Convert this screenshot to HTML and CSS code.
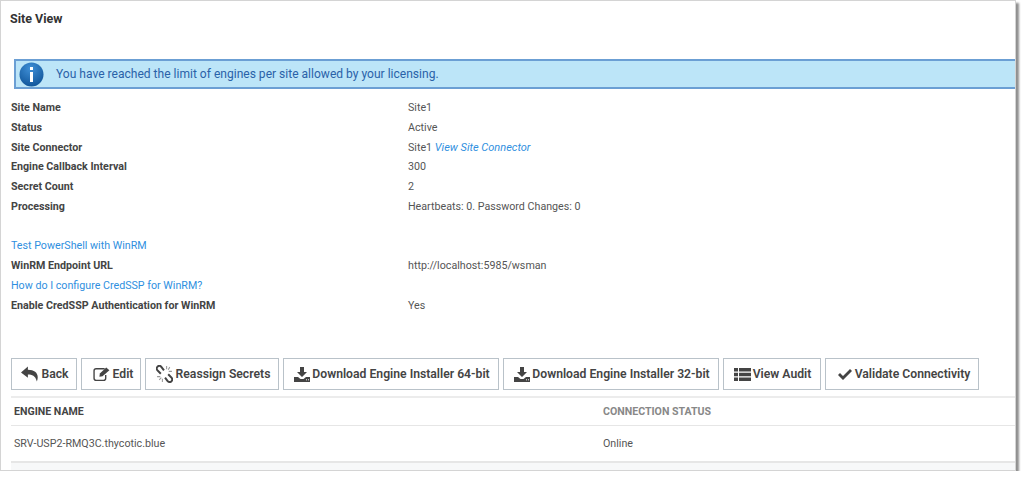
FILE: index.html
```html
<!DOCTYPE html>
<html lang="en">

<head>
    <meta charset="UTF-8">
    <title>Site View</title>
    <link rel="stylesheet" href="styles.css">
</head>

<body>
    <div class="frame">
        <h1 class="title">Site View</h1>

        <div class="alert">
            <svg class="alert-icon" width="25" height="25" viewBox="0 0 25 25">
                <defs>
                    <radialGradient id="ball" cx="0.45" cy="0.25" r="0.85">
                        <stop offset="0" stop-color="#3f8fd6" />
                        <stop offset="1" stop-color="#0b4f94" />
                    </radialGradient>
                </defs>
                <circle cx="12.5" cy="12.5" r="12" fill="url(#ball)" />
                <rect x="11" y="5" width="3" height="3" fill="#fff" />
                <rect x="11" y="10" width="3" height="10" fill="#fff" />
            </svg>
            <span>You have reached the limit of engines per site allowed by your licensing.</span>
        </div>

        <div class="details">
            <div class="row"><b>Site Name</b><span>Site1</span></div>
            <div class="row"><b>Status</b><span>Active</span></div>
            <div class="row"><b>Site Connector</b><span>Site1 <a class="italic" href="#">View Site Connector</a></span></div>
            <div class="row"><b>Engine Callback Interval</b><span>300</span></div>
            <div class="row"><b>Secret Count</b><span>2</span></div>
            <div class="row"><b>Processing</b><span>Heartbeats: 0. Password Changes: 0</span></div>
            <div class="row"></div>
            <div class="row"><a href="#">Test PowerShell with WinRM</a></div>
            <div class="row"><b>WinRM Endpoint URL</b><span>http://localhost:5985/wsman</span></div>
            <div class="row"><a href="#">How do I configure CredSSP for WinRM?</a></div>
            <div class="row"><b>Enable CredSSP Authentication for WinRM</b><span>Yes</span></div>
        </div>

        <div class="buttons">
            <button class="btn w-back">
                <svg width="18" height="16" viewBox="0 0 17 15"><path d="M6.5 0.5 L0 6 L6.5 11 V8 C10.5 8 13.5 9 15 14.5 C17.5 8 14 3.5 6.5 3.5 Z" fill="#444" /></svg>
                Back
            </button>
            <button class="btn w-edit">
                <svg width="18" height="16" viewBox="0 0 17 14">
                    <path d="M11 2 H3 A2 2 0 0 0 1 4 V11 A2 2 0 0 0 3 13 H10 A2 2 0 0 0 12 11 V8" fill="none" stroke="#444" stroke-width="1.3" />
                    <path d="M6 9.5 L6.5 6.5 L12.5 0.8 L15.5 3.5 L9 9.2 Z" fill="#444" />
                </svg>
                Edit
            </button>
            <button class="btn w-reassign">
                <svg width="17" height="18" viewBox="0 0 16 17">
                    <path d="M7.5 5 L5 1.8 A2.3 2.3 0 0 0 1.2 4.8 L4.5 8.2 M8.5 12 L11 15.2 A2.3 2.3 0 0 0 14.8 12.2 L11.5 8.8" fill="none" stroke="#444" stroke-width="1.9" />
                    <path d="M10 1 V4 M13 2 L11.5 4.5 M15 6 H12 M1 11 H4 M3 14 L5 12 M6 16 V13" fill="none" stroke="#999" stroke-width="1" />
                </svg>
                Reassign Secrets
            </button>
            <button class="btn w-download">
                <svg width="16" height="15" viewBox="0 0 16 15">
                    <path d="M6 0 H10 V5 H13 L8 10 L3 5 H6 Z" fill="#444" />
                    <path d="M0 10 H4 L6.5 12 H9.5 L12 10 H16 V15 H0 Z" fill="#444" />
                    <rect x="12" y="12.3" width="1" height="1" fill="#fff" />
                    <rect x="14" y="12.3" width="1" height="1" fill="#fff" />
                </svg>
                Download Engine Installer 64-bit
            </button>
            <button class="btn w-download">
                <svg width="16" height="15" viewBox="0 0 16 15">
                    <path d="M6 0 H10 V5 H13 L8 10 L3 5 H6 Z" fill="#444" />
                    <path d="M0 10 H4 L6.5 12 H9.5 L12 10 H16 V15 H0 Z" fill="#444" />
                    <rect x="12" y="12.3" width="1" height="1" fill="#fff" />
                    <rect x="14" y="12.3" width="1" height="1" fill="#fff" />
                </svg>
                Download Engine Installer 32-bit
            </button>
            <button class="btn w-audit">
                <svg width="17" height="13" viewBox="0 0 17 13">
                    <path d="M0 0 H4 V3.4 H0 Z M5 0 H17 V3.4 H5 Z M0 4.8 H4 V8.2 H0 Z M5 4.8 H17 V8.2 H5 Z M0 9.6 H4 V13 H0 Z M5 9.6 H17 V13 H5 Z" fill="#444" />
                </svg>
                View Audit
            </button>
            <button class="btn w-validate">
                <svg width="14" height="11" viewBox="0 0 14 11"><path d="M0 6 L2 4 L5 7 L12 0 L14 2 L5 11 Z" fill="#444" /></svg>
                Validate Connectivity
            </button>
        </div>

        <div class="engines">
            <div class="engines-head">
                <div class="col-name">ENGINE NAME</div>
                <div class="col-status">CONNECTION STATUS</div>
            </div>
            <div class="engines-row">
                <div class="col-name">SRV-USP2-RMQ3C.thycotic.blue</div>
                <div>Online</div>
            </div>
        </div>
    </div>
</body>

</html>
```

FILE: styles.css
```css
/* General */
body {
    margin: 0;
    background-color: #fff;
    font-family: Roboto, "Liberation Sans", sans-serif;
    font-size: 10.7px;
    color: #555;
    overflow: hidden;
}

a {
    color: #2f8fe0;
    text-decoration: none;
}

.italic {
    font-style: italic;
    font-size: 11px;
}

/* Window frame */
.frame {
    display: flex;
    flex-direction: column;
    box-sizing: border-box;
    width: 1016px;
    height: 471px;
    border: 1px solid #d4d4d4;
    box-shadow: 3px 3px 2px #909090;
    background-color: #fff;
    overflow: hidden;
}

.title {
    margin: 0;
    padding: 11px 0 0 9px;
    height: 47px;
    flex-shrink: 0;
    font-size: 12.5px;
    line-height: 14px;
    font-weight: 700;
    color: #333;
}

/* Info message */
.alert {
    display: flex;
    align-items: center;
    flex-shrink: 0;
    height: 30px;
    box-sizing: border-box;
    margin-left: 13px;
    margin-right: -1px;
    padding-left: 3px;
    background-color: #bce5f8;
    border: 1px solid #6b9fd4;
    border-width: 2px 0 2px 2px;
    font-size: 12.05px;
    color: #2a62a8;
}

.alert-icon {
    margin-right: 12px;
}

/* Details */
.details {
    padding: 9px 0 0 10px;
}

.row {
    display: flex;
    height: 19.75px;
    line-height: 19.75px;
}

.row b {
    width: 397px;
    font-weight: 700;
    color: #444;
}

/* Buttons */
.buttons {
    display: flex;
    gap: 4px;
    padding: 43px 0 6px 10px;
}

.btn {
    display: flex;
    align-items: center;
    justify-content: center;
    gap: 2px;
    height: 32px;
    padding: 0;
    background-color: #fff;
    border: 1px solid #b9c2c9;
    font-family: Roboto, "Liberation Sans", sans-serif;
    font-size: 12.2px;
    font-weight: 600;
    color: #444;
}

.w-back { width: 66px; padding-left: 2px; }
.w-edit { width: 60px; padding-left: 4px; }
.w-reassign { width: 134px; padding-left: 2px; gap: 3px; }
.w-download { width: 216px; padding-left: 2px; }
.w-audit { width: 98px; padding-left: 1px; }
.w-validate { width: 154px; padding-left: 4px; gap: 3px; }

/* Engine table */
.engines {
    flex-grow: 1;
    margin-left: 10px;
    border-top: 2px solid #ececec;
    background-color: #f7f8f9;
}

.engines-head,
.engines-row {
    display: flex;
    align-items: center;
    padding-left: 3px;
    background-color: #fff;
}

.engines-head {
    height: 27px;
    border-bottom: 1px solid #e6e6e6;
    font-size: 10.6px;
    font-weight: 700;
}

.engines-head .col-name {
    color: #444;
}

.col-status {
    color: #888;
}

.engines-row {
    height: 35px;
    border-bottom: 2px solid #e6e6e6;
}

.col-name {
    width: 589px;
}
```
